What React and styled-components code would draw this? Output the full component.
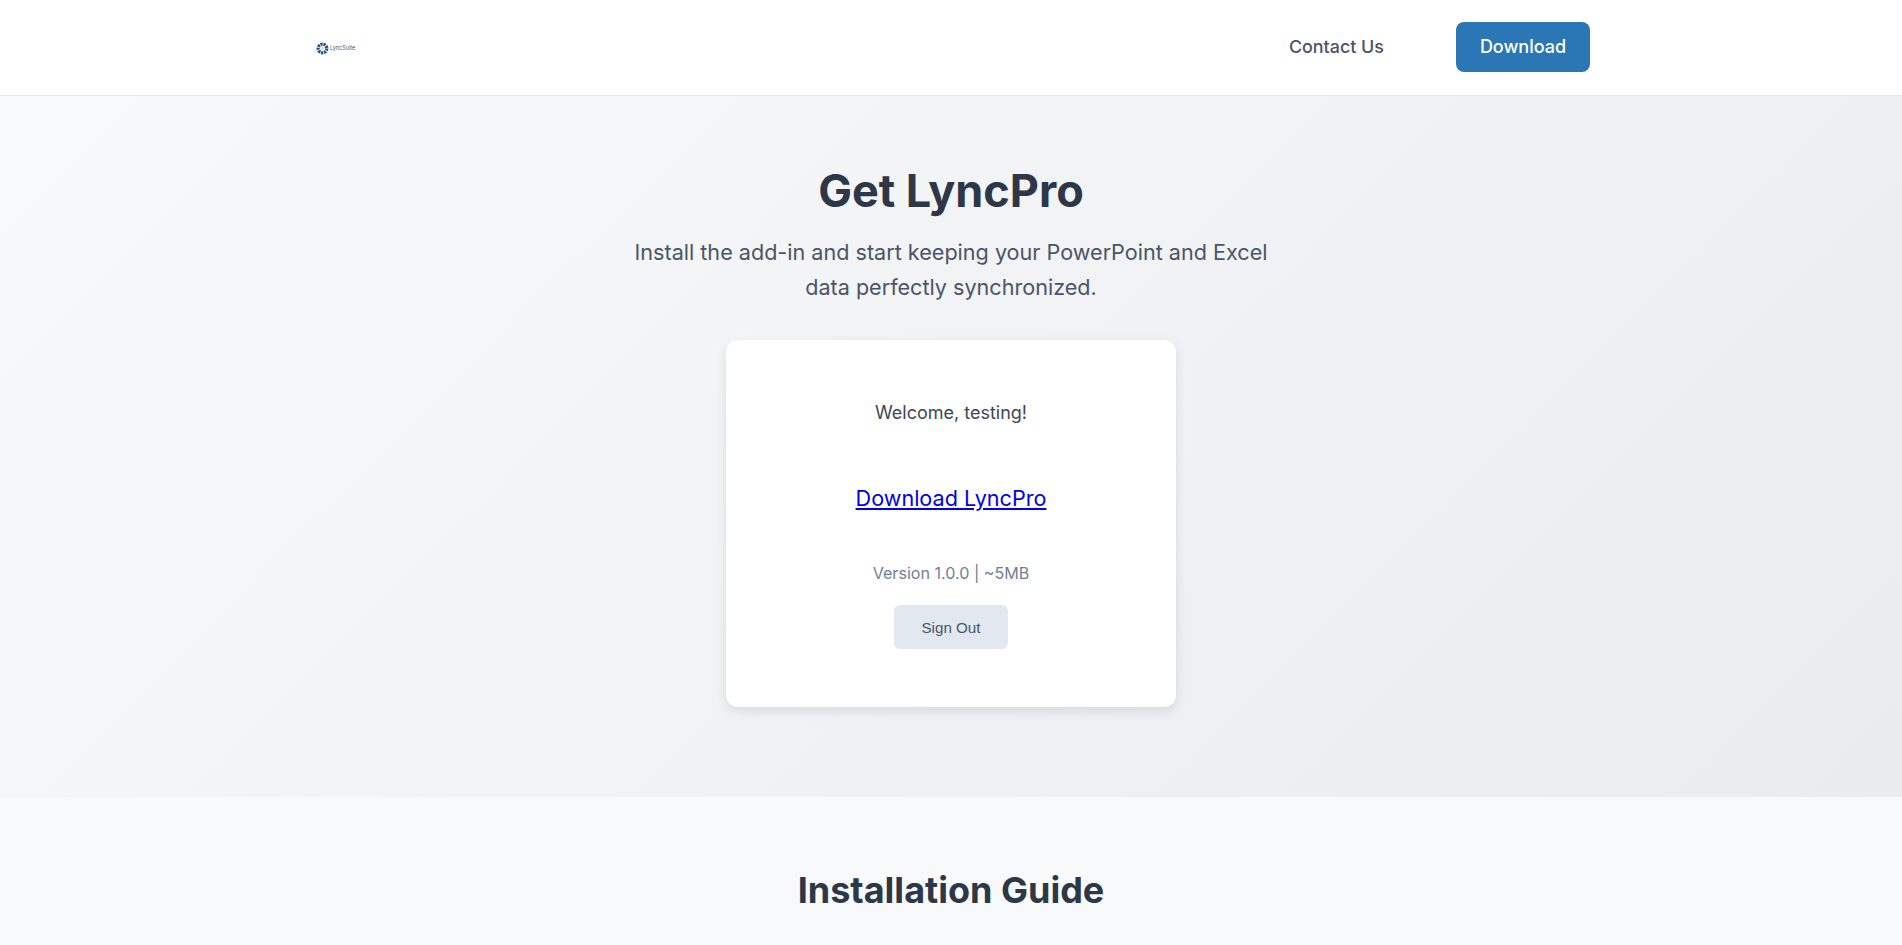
import React from "react";
import styled, { createGlobalStyle } from "styled-components";

const GlobalStyle = createGlobalStyle`
  * { box-sizing: border-box; }
  html, body { margin: 0; height: 100%; overflow: hidden; }
  body {
    font-family: Inter, "Liberation Sans", sans-serif;
    line-height: 1.6;
    color: #2d3748;
    background: #f8f9fa;
  }
`;

const Header = styled.header`
  height: 96px;
  background: #fff;
  border-bottom: 1px solid #e2e8f0;
`;

const HeaderInner = styled.div`
  width: 1280px;
  height: 94px;
  margin: 0 auto;
  padding-right: 1px;
  display: flex;
  align-items: center;
  justify-content: space-between;
`;

const LogoLink = styled.a`
  display: flex;
  align-items: center;
  gap: 1px;
  margin: 3px 0 0 5px;
  color: #3d5a7c;
  font-size: 5.5px;
  line-height: 1;
`;

const Nav = styled.nav`
  display: flex;
  align-items: center;
  gap: 72px;
`;

const NavLink = styled.a`
  color: #4a5568;
  font-size: 17.9px;
  font-weight: 500;
`;

const NavButton = styled.a`
  width: 134px;
  height: 50px;
  display: flex;
  align-items: center;
  justify-content: center;
  background: #2b77b5;
  color: #fff;
  border-radius: 8px;
  font-size: 18px;
  font-weight: 500;
`;

const Hero = styled.section`
  height: 701px;
  padding-top: 59px;
  display: flex;
  flex-direction: column;
  align-items: center;
  background: linear-gradient(135deg, #f8f9fa 0%, #e9ecef 100%);
`;

const Title = styled.h1`
  margin: 0 0 8px;
  font-size: 45px;
  font-weight: 700;
  line-height: 1.6;
  color: #2d3748;
`;

const Subtitle = styled.p`
  margin: 0 0 36px;
  width: 700px;
  font-size: 21.6px;
  line-height: 1.6;
  color: #4a5568;
  text-align: center;
  padding: 0 20px;
`;

const Card = styled.div`
  width: 450px;
  padding: 48px 48px 58px;
  display: flex;
  flex-direction: column;
  align-items: center;
  background: #fff;
  border-radius: 12px;
  box-shadow: 0 4px 12px rgba(0, 0, 0, 0.1);
`;

const Welcome = styled.p`
  margin: 11px 0 53px;
  font-size: 18px;
  color: #3d4757;
`;

const DownloadLink = styled.a`
  font-size: 21.6px;
  color: #0000ee;
  text-decoration: underline;
`;

const Version = styled.p`
  margin: 46px 0 18px;
  font-size: 16.1px;
  color: #718096;
`;

const SignOut = styled.button`
  width: 113.6px;
  height: 44px;
  border: none;
  border-radius: 6px;
  background: #e2e8f0;
  color: #4a5568;
  font-family: "Liberation Sans", Arial, sans-serif;
  font-size: 15.2px;
`;

const Guide = styled.section`
  padding-top: 65px;
  background: #f8f9fa;
`;

const GuideTitle = styled.h2`
  margin: 0;
  font-size: 36px;
  font-weight: 700;
  line-height: 1.6;
  text-align: center;
  color: #2d3748;
`;

const LogoMark = () => (
  <svg width="13" height="13" viewBox="0 0 24 24">
    <circle cx="12" cy="12" r="8" fill="none" stroke="#24527f" strokeWidth="6" strokeDasharray="4 1.5" />
    <circle cx="12" cy="12" r="4" fill="#dfe8f1" />
  </svg>
);

export default function App() {
  return (
    <>
      <GlobalStyle />
      <Header>
        <HeaderInner>
          <LogoLink>
            <LogoMark />
            <span>LyncSuite</span>
          </LogoLink>
          <Nav>
            <NavLink>Contact Us</NavLink>
            <NavButton>Download</NavButton>
          </Nav>
        </HeaderInner>
      </Header>
      <Hero>
        <Title>Get LyncPro</Title>
        <Subtitle>Install the add-in and start keeping your PowerPoint and Excel data perfectly synchronized.</Subtitle>
        <Card>
          <Welcome>Welcome, testing!</Welcome>
          <DownloadLink href="#">Download LyncPro</DownloadLink>
          <Version>Version 1.0.0 | ~5MB</Version>
          <SignOut>Sign Out</SignOut>
        </Card>
      </Hero>
      <Guide>
        <GuideTitle>Installation Guide</GuideTitle>
      </Guide>
    </>
  );
}
